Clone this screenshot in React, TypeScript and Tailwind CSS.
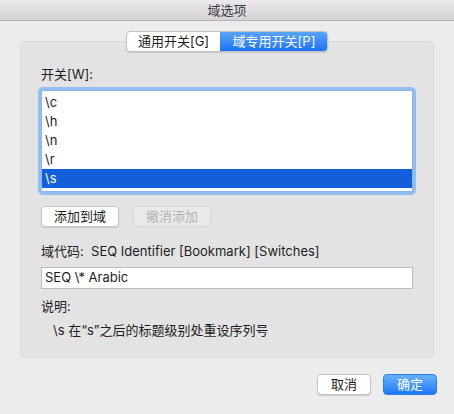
const font = {
  fontFamily: 'Inter, "Noto Sans CJK SC", sans-serif',
};

const switches = ["\\c", "\\h", "\\n", "\\r", "\\s"];

export default function App() {
  const selected = "\\s";

  return (
    <div
      className="w-[454px] h-[414px] bg-[#ececec] flex flex-col text-[13px] text-[#1d1d1d] overflow-hidden"
      style={font}
    >
      {/* title bar */}
      <div className="h-[21px] shrink-0 bg-gradient-to-b from-[#ebe9eb] to-[#d4d2d4] border-b border-[#b4b2b4] flex items-center justify-center text-[#3b3b3b] leading-none">
        域选项
      </div>

      {/* group box */}
      <div className="relative mx-5 mt-5 h-[317px] rounded-[5px] bg-[#e3e3e3] border border-[#d9d9d9] px-5 pt-[24px]">
        {/* segmented tabs */}
        <div className="absolute left-1/2 -translate-x-1/2 -top-[11px] flex h-[21px] rounded-[4px] border border-[#c2c2c2] bg-white shadow-[0_1px_1px_rgba(0,0,0,0.12)] overflow-hidden">
          <div className="w-[93px] flex items-center justify-center text-[#1d1d1d]">
            通用开关[G]
          </div>
          <div className="w-[108px] flex items-center justify-center text-white bg-gradient-to-b from-[#5aa6fb] to-[#1a6ff8] -my-px -mr-px rounded-r-[4px]">
            域专用开关[P]
          </div>
        </div>

        <div className="leading-[17px]">开关[W]:</div>

        {/* switches list */}
        <div className="mt-[7px] h-[102px] bg-white border border-[#8ab6ea] rounded-[2px] shadow-[0_0_0_3px_#92bff2] pt-[2px]">
          {switches.map((s) => (
            <div
              key={s}
              className={`h-[19px] leading-[19px] px-[3px] ${
                s === selected ? "bg-[#135fd9] text-white" : "text-[#1d1d1d]"
              }`}
            >
              {s}
            </div>
          ))}
        </div>

        <div className="mt-[14px] flex gap-[14px]">
          <button className="w-[78px] h-[21px] rounded-[4px] bg-white border border-[#c4c4c4] shadow-[0_1px_1px_rgba(0,0,0,0.12)] text-[#1d1d1d] leading-none">
            添加到域
          </button>
          <button className="w-[78px] h-[21px] rounded-[4px] bg-[#e9e9e9] border border-[#d6d6d6] text-[#b3b3b3] leading-none">
            撤消添加
          </button>
        </div>

        <div className="mt-[16px] leading-[17px]">
          域代码:&nbsp;&nbsp;SEQ Identifier [Bookmark] [Switches]
        </div>

        <div className="mt-[7px] h-[22px] bg-white border border-[#bdbdbd] px-[3px] flex items-center">
          SEQ \* Arabic
        </div>

        <div className="mt-[9px] leading-[17px]">说明:</div>

        <div className="mt-[7px] pl-3 leading-[17px]">
          \s 在“s”之后的标题级别处重设序列号
        </div>
      </div>

      {/* dialog buttons */}
      <div className="mt-[16px] mr-[17px] flex justify-end gap-3">
        <button className="w-[54px] h-[21px] rounded-[4px] bg-white border border-[#c4c4c4] shadow-[0_1px_1px_rgba(0,0,0,0.12)] text-[#1d1d1d] leading-none">
          取消
        </button>
        <button className="w-[54px] h-[21px] rounded-[4px] bg-gradient-to-b from-[#69b1fa] to-[#1a78fb] border border-[#2b7ef0] text-white leading-none">
          确定
        </button>
      </div>
    </div>
  );
}
